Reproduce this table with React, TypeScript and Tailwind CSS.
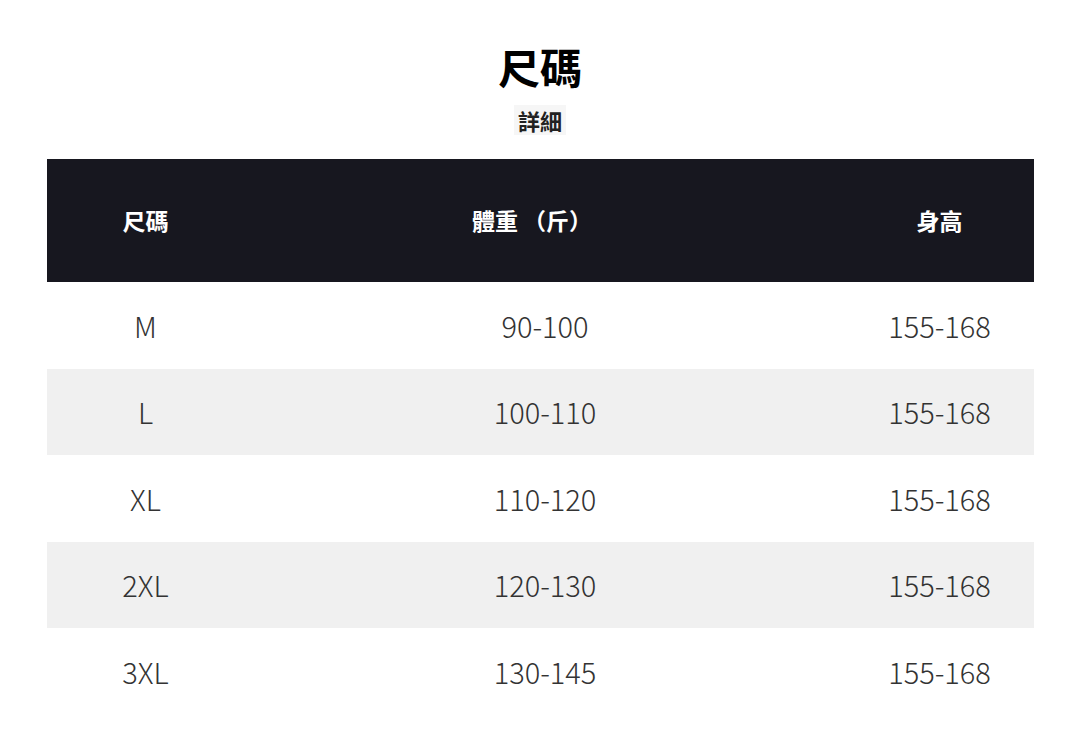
const rows = [
  { size: "M", weight: "90-100", height: "155-168" },
  { size: "L", weight: "100-110", height: "155-168" },
  { size: "XL", weight: "110-120", height: "155-168" },
  { size: "2XL", weight: "120-130", height: "155-168" },
  { size: "3XL", weight: "130-145", height: "155-168" },
];

const font = { fontFamily: '"Noto Sans CJK TC", "Noto Sans", sans-serif' };

export default function App() {
  return (
    <div className="w-[1080px] h-[747px] bg-white flex flex-col items-center" style={font}>
      {/* Title */}
      <h1 className="pt-[45px] text-[42px] leading-none font-bold text-black">尺碼</h1>
      <div className="mt-[18px] bg-[#f6f6f6] px-1 py-1 text-[22px] leading-none font-bold text-[#222]">詳細</div>

      {/* Table */}
      <div className="mt-[24px] w-[987px]">
        <div className="grid grid-cols-[198px_1fr_188px] h-[123px] items-center bg-[#17171f] text-white text-[23px] font-bold">
          <div className="text-center">尺碼</div>
          <div className="text-center pr-[26px]">體重 （斤）</div>
          <div className="text-center">身高</div>
        </div>
        {rows.map((r, i) => (
          <div
            key={r.size}
            className={
              "grid grid-cols-[198px_1fr_188px] h-[86.6px] items-center text-[29px] font-light text-[#333] " +
              (i % 2 === 1 ? "bg-[#f0f0f0]" : "bg-white")
            }
          >
            <div className="text-center">{r.size}</div>
            <div className="text-center">{r.weight}</div>
            <div className="text-center">{r.height}</div>
          </div>
        ))}
      </div>
    </div>
  );
}
